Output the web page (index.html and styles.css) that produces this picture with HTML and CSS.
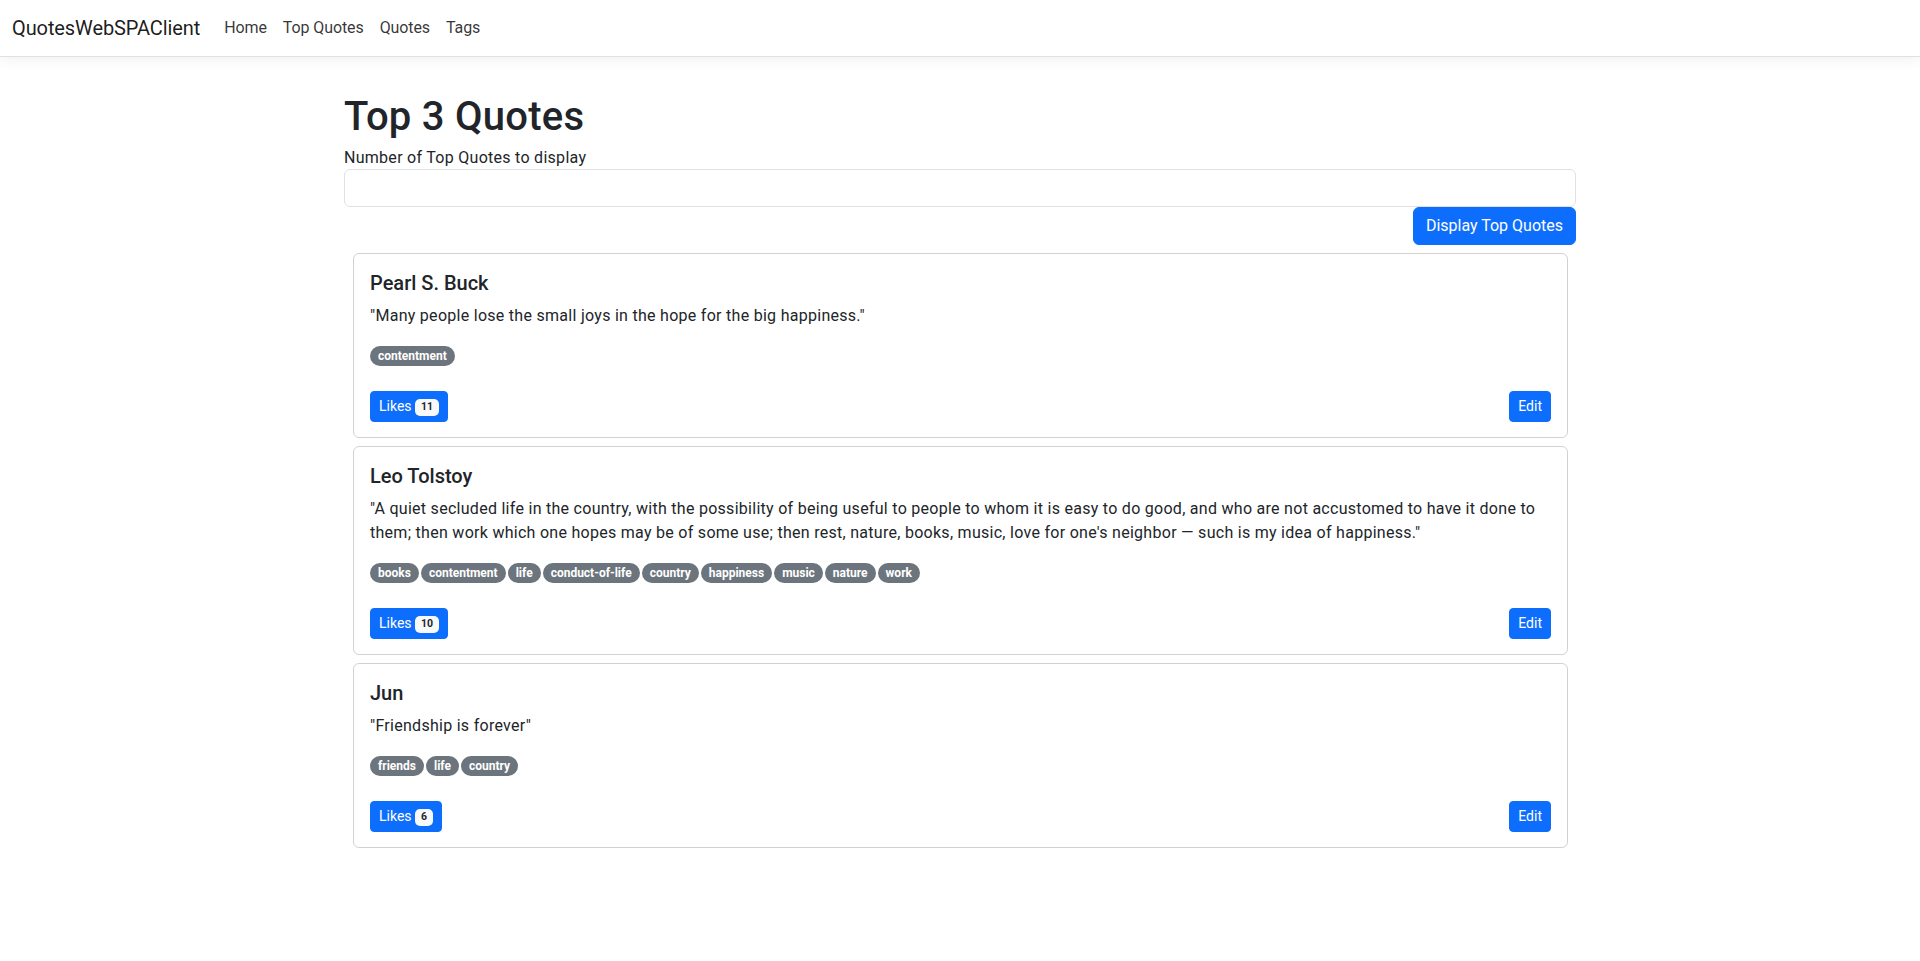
FILE: index.html
```html
<!DOCTYPE html>
<html lang="en">
<head>
<meta charset="utf-8">
<title>QuotesWebSPAClient</title>
<link rel="stylesheet" href="styles.css">
</head>
<body>
<header>
  <nav class="navbar">
    <a class="brand" href="#">QuotesWebSPAClient</a>
    <ul class="nav-links">
      <li><a href="#">Home</a></li>
      <li><a href="#">Top Quotes</a></li>
      <li><a href="#">Quotes</a></li>
      <li><a href="#">Tags</a></li>
    </ul>
  </nav>
</header>
<main class="container">
  <h1 class="page-title">Top 3 Quotes</h1>
  <label class="form-label" for="topn">Number of Top Quotes to display</label>
  <input class="form-control" id="topn" type="text">
  <div class="form-actions">
    <button class="btn btn-primary">Display Top Quotes</button>
  </div>

  <div class="card">
    <h5 class="card-title">Pearl S. Buck</h5>
    <p class="card-text">"Many people lose the small joys in the hope for the big happiness."</p>
    <div class="tags">
      <span class="badge">contentment</span>
    </div>
    <div class="card-actions">
      <button class="btn btn-sm btn-primary">Likes <span class="count">11</span></button>
      <button class="btn btn-sm btn-primary">Edit</button>
    </div>
  </div>

  <div class="card">
    <h5 class="card-title">Leo Tolstoy</h5>
    <p class="card-text">"A quiet secluded life in the country, with the possibility of being useful to people to whom it is easy to do good, and who are not accustomed to have it done to them; then work which one hopes may be of some use; then rest, nature, books, music, love for one's neighbor — such is my idea of happiness."</p>
    <div class="tags">
      <span class="badge">books</span>
      <span class="badge">contentment</span>
      <span class="badge">life</span>
      <span class="badge">conduct-of-life</span>
      <span class="badge">country</span>
      <span class="badge">happiness</span>
      <span class="badge">music</span>
      <span class="badge">nature</span>
      <span class="badge">work</span>
    </div>
    <div class="card-actions">
      <button class="btn btn-sm btn-primary">Likes <span class="count">10</span></button>
      <button class="btn btn-sm btn-primary">Edit</button>
    </div>
  </div>

  <div class="card">
    <h5 class="card-title">Jun</h5>
    <p class="card-text">"Friendship is forever"</p>
    <div class="tags">
      <span class="badge">friends</span>
      <span class="badge">life</span>
      <span class="badge">country</span>
    </div>
    <div class="card-actions">
      <button class="btn btn-sm btn-primary">Likes <span class="count">6</span></button>
      <button class="btn btn-sm btn-primary">Edit</button>
    </div>
  </div>
</main>
</body>
</html>
```

FILE: styles.css
```css
* { box-sizing: border-box; }

html, body {
  margin: 0;
  padding: 0;
  background: #fff;
}

body {
  font-family: "Segoe UI", Roboto, "Liberation Sans", sans-serif;
  font-size: 16px;
  line-height: 1.5;
  color: #212529;
}

.navbar {
  display: flex;
  align-items: center;
  height: 57px;
  padding: 8px 12px;
  border-bottom: 1px solid #dee2e6;
  box-shadow: 0 4px 12px rgba(0, 0, 0, 0.05);
}

.brand {
  font-size: 20px;
  line-height: 30px;
  color: rgba(0, 0, 0, 0.9);
  text-decoration: none;
  margin-right: 16px;
  letter-spacing: -0.1px;
}

.nav-links {
  display: flex;
  list-style: none;
  margin: 0;
  padding: 0;
}

.nav-links a {
  display: block;
  padding: 8px;
  color: rgba(0, 0, 0, 0.8);
  text-decoration: none;
  letter-spacing: -0.1px;
}

.container {
  width: 1232px;
  margin: 0 auto;
  padding: 32px 0 16px;
}

.page-title {
  font-size: 40px;
  font-weight: 500;
  line-height: 1.2;
  letter-spacing: 0.25px;
  margin: 4px 0 4px;
}

.form-label {
  display: block;
  padding-top: 1px;
  line-height: 23px;
  letter-spacing: 0.28px;
}

.form-control {
  display: block;
  width: 100%;
  height: 38px;
  padding: 6px 12px;
  font: inherit;
  color: #212529;
  border: 1px solid #dee2e6;
  border-radius: 6px;
  background: #fff;
}

.form-actions {
  display: flex;
  justify-content: flex-end;
}

.btn {
  font-family: inherit;
  font-size: 16px;
  line-height: 1.5;
  padding: 6px 12px;
  border: 1px solid transparent;
  border-radius: 6px;
  cursor: pointer;
}

.btn-primary {
  background: #0d6efd;
  border-color: #0d6efd;
  color: #fff;
}

.btn-sm {
  font-size: 14px;
  padding: 4px 8px;
  border-radius: 4px;
}

.card {
  margin: 8px 8px 0 9px;
  padding: 17px 16px 15px 16px;
  border: 1px solid rgba(0, 0, 0, 0.175);
  border-radius: 6px;
}

.card-title {
  font-size: 20px;
  font-weight: 500;
  line-height: 1.2;
  margin: 0 0 9px;
}

.card-text {
  margin: 0 0 16px;
  letter-spacing: 0.28px;
}

.tags {
  display: flex;
  flex-wrap: wrap;
  align-items: center;
  gap: 2px;
  height: 24px;
  margin-bottom: 23px;
}

.badge {
  display: inline-block;
  font-size: 12px;
  font-weight: 700;
  line-height: 1;
  padding: 4px 8px;
  color: #fff;
  background: #6c757d;
  border-radius: 50rem;
}

.card-actions {
  display: flex;
  justify-content: space-between;
  align-items: center;
}

.count {
  display: inline-block;
  font-size: 10.5px;
  font-weight: 700;
  line-height: 1;
  padding: 3.5px 6px;
  background: #f8f9fa;
  color: #212529;
  border-radius: 5px;
  vertical-align: 1px;
}
```
